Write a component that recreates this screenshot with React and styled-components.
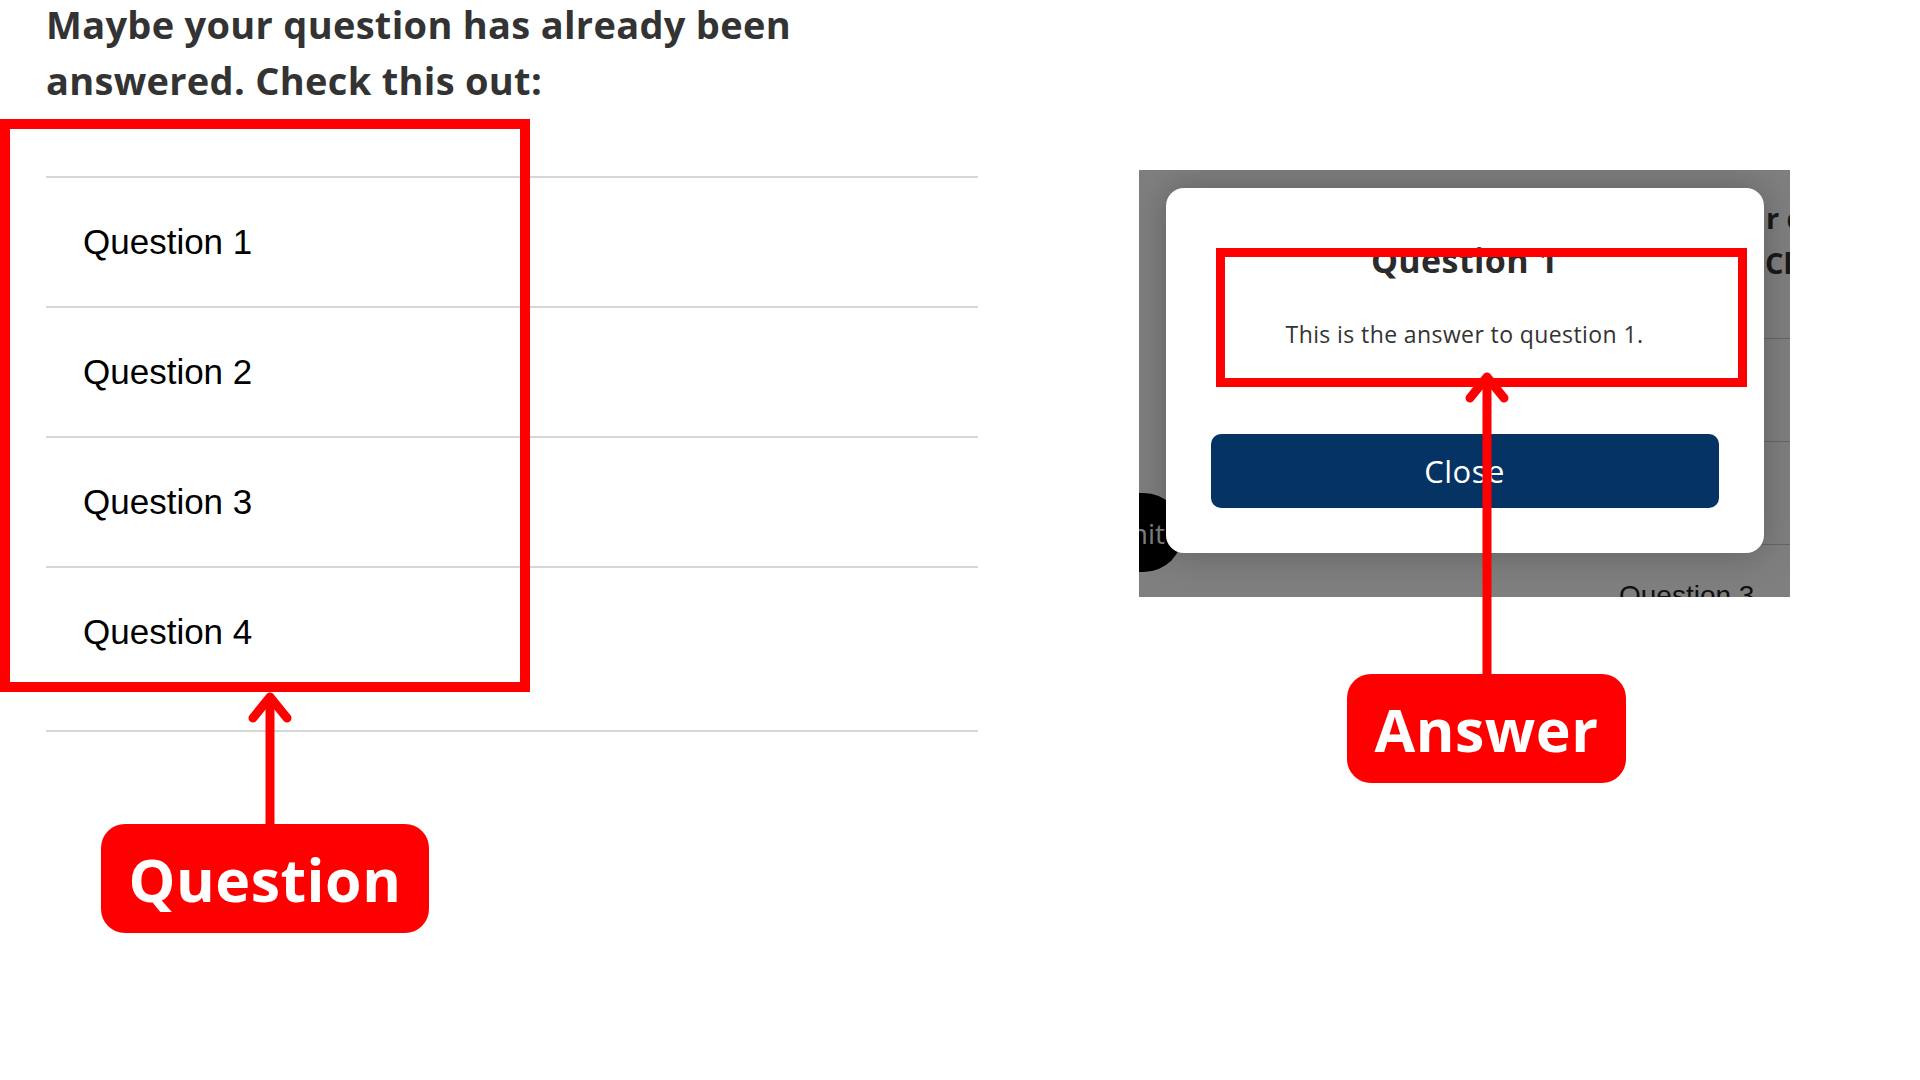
import React from "react";
import styled, { createGlobalStyle } from "styled-components";

const GlobalStyle = createGlobalStyle`
  html, body {
    margin: 0;
    padding: 0;
    background: #ffffff;
  }
  body {
    width: 1920px;
    height: 1080px;
    overflow: hidden;
    font-family: "Open Sans", "Liberation Sans", sans-serif;
  }
`;

const questions = ["Question 1", "Question 2", "Question 3", "Question 4"];

const Arrow = ({ length, shift = 0 }) => (
  <ArrowSvg $shift={shift} width="50" height={length} viewBox={`0 0 50 ${length}`}>
    <line x1="25" y1="6" x2="25" y2={length} stroke="#ff0000" strokeWidth="9" />
    <polyline
      points="8,27 25,6 42,27"
      fill="none"
      stroke="#ff0000"
      strokeWidth="9"
      strokeLinecap="round"
      strokeLinejoin="round"
    />
  </ArrowSvg>
);

const App = () => {
  return (
    <Page>
      <GlobalStyle />
      <LeftCol>
        <Heading>
          Maybe your question has already been
          <br />
          answered. Check this out:
        </Heading>
        <FaqList>
          {questions.map((q) => (
            <FaqRow key={q}>{q}</FaqRow>
          ))}
        </FaqList>
      </LeftCol>

      <Shot>
        <BehindPage>
          <SubmitPill>Submit</SubmitPill>
          <BehindCol>
            <BehindHeading>
              <span>Maybe your question has already been answered.</span>
              <span>Check this out:</span>
            </BehindHeading>
            <BehindList>
              <BehindRow>Question 1</BehindRow>
              <BehindRow>Question 2</BehindRow>
              <BehindRow>Question 3</BehindRow>
            </BehindList>
          </BehindCol>
        </BehindPage>
        <Dim>
          <Modal>
            <ModalTitle>Question 1</ModalTitle>
            <ModalText>This is the answer to question 1.</ModalText>
            <CloseButton>Close</CloseButton>
          </Modal>
        </Dim>
      </Shot>

      <Callout $x={0} $y={119} $w={530}>
        <Outline $h={573} $b={10} />
        <Tail $lift={1}>
          <Arrow length={133} shift={10} />
          <Label>Question</Label>
        </Tail>
      </Callout>

      <Callout $x={1216} $y={248} $w={531}>
        <Outline $h={139} $b={9} />
        <Tail $lift={16} $nudge={10}>
          <Arrow length={303} />
          <Label>Answer</Label>
        </Tail>
      </Callout>
    </Page>
  );
};

const Page = styled.div`
  position: relative;
  width: 1920px;
  height: 1080px;
  display: flex;
  align-items: flex-start;
`;

const LeftCol = styled.div`
  width: 978px;
  padding-left: 46px;
  box-sizing: border-box;
  flex: none;
`;

const Heading = styled.h1`
  margin: -4px 0 0;
  font-family: "Open Sans", sans-serif;
  font-weight: 700;
  font-size: 38px;
  line-height: 56px;
  letter-spacing: 0.3px;
  color: #333333;
  white-space: nowrap;
`;

const FaqList = styled.div`
  margin-top: 68px;
  padding-bottom: 34px;
  border-bottom: 2px solid #d6d6d6;
`;

const FaqRow = styled.div`
  height: 128px;
  border-top: 2px solid #d6d6d6;
  padding-left: 37px;
  display: flex;
  align-items: center;
  font-family: "Liberation Sans", Arial, sans-serif;
  font-size: 35px;
  color: #000000;
`;

const Shot = styled.div`
  position: relative;
  flex: none;
  width: 651px;
  height: 427px;
  margin-left: 161px;
  margin-top: 170px;
  overflow: hidden;
`;

const BehindPage = styled.div`
  position: absolute;
  inset: 0;
  display: flex;
  align-items: flex-start;
  background: #ffffff;
`;

const SubmitPill = styled.div`
  flex: none;
  width: 160px;
  height: 79px;
  margin-top: 323px;
  margin-left: -116px;
  padding-right: 18px;
  box-sizing: border-box;
  border-radius: 40px;
  background: #000000;
  color: #ffffff;
  display: flex;
  align-items: center;
  justify-content: flex-end;
  font-size: 28px;
`;

const BehindCol = styled.div`
  flex: none;
  width: 700px;
  margin-left: 406px;
`;

const BehindHeading = styled.div`
  margin-top: 25px;
  padding-left: 176px;
  font-weight: 700;
  font-size: 29px;
  line-height: 45px;
  color: #333333;
  white-space: nowrap;

  span {
    display: block;
  }
  span:first-child {
    text-indent: -157px;
  }
`;

const BehindList = styled.div`
  margin-top: 53px;
`;

const BehindRow = styled.div`
  height: 103px;
  border-top: 1px solid #cccccc;
  padding-left: 30px;
  box-sizing: border-box;
  display: flex;
  align-items: center;
  font-family: "Liberation Sans", Arial, sans-serif;
  font-size: 28px;
  color: #222222;
`;

const Dim = styled.div`
  position: absolute;
  inset: 0;
  background: rgba(0, 0, 0, 0.5);
  display: flex;
  justify-content: center;
  align-items: flex-start;
  padding-top: 18px;
`;

const Modal = styled.div`
  width: 598px;
  height: 365px;
  box-sizing: border-box;
  padding-top: 50px;
  background: #ffffff;
  border-radius: 18px;
  box-shadow: 0 0 36px rgba(0, 0, 0, 0.25);
  display: flex;
  flex-direction: column;
  align-items: center;
`;

const ModalTitle = styled.div`
  font-weight: 700;
  font-size: 34px;
  line-height: 44px;
  letter-spacing: 0.4px;
  color: #2b2b2b;
`;

const ModalText = styled.div`
  margin-top: 36px;
  font-size: 23px;
  line-height: 32px;
  letter-spacing: 0.4px;
  color: #333333;
`;

const CloseButton = styled.button`
  margin-top: 84px;
  width: 508px;
  height: 74px;
  border: none;
  border-radius: 10px;
  background: #043364;
  color: #ffffff;
  font-family: "Open Sans", sans-serif;
  font-size: 31px;
  letter-spacing: 0.5px;
  cursor: pointer;
`;

const Callout = styled.div`
  position: absolute;
  left: ${(p) => p.$x}px;
  top: ${(p) => p.$y}px;
  width: ${(p) => p.$w}px;
  display: flex;
  flex-direction: column;
`;

const Outline = styled.div`
  height: ${(p) => p.$h}px;
  border: ${(p) => p.$b}px solid #ff0000;
  box-sizing: border-box;
`;

const Tail = styled.div`
  display: flex;
  flex-direction: column;
  align-items: center;
  margin-top: -${(p) => p.$lift}px;
  padding-left: ${(p) => p.$nudge || 0}px;
`;

const ArrowSvg = styled.svg`
  display: block;
  margin-left: ${(p) => p.$shift}px;
`;

const Label = styled.div`
  height: 109px;
  padding: 0 28px;
  border-radius: 24px;
  background: #ff0000;
  color: #ffffff;
  display: flex;
  align-items: center;
  font-family: "Open Sans", sans-serif;
  font-weight: 700;
  font-size: 59px;
  letter-spacing: 0.5px;
`;

export default App;
